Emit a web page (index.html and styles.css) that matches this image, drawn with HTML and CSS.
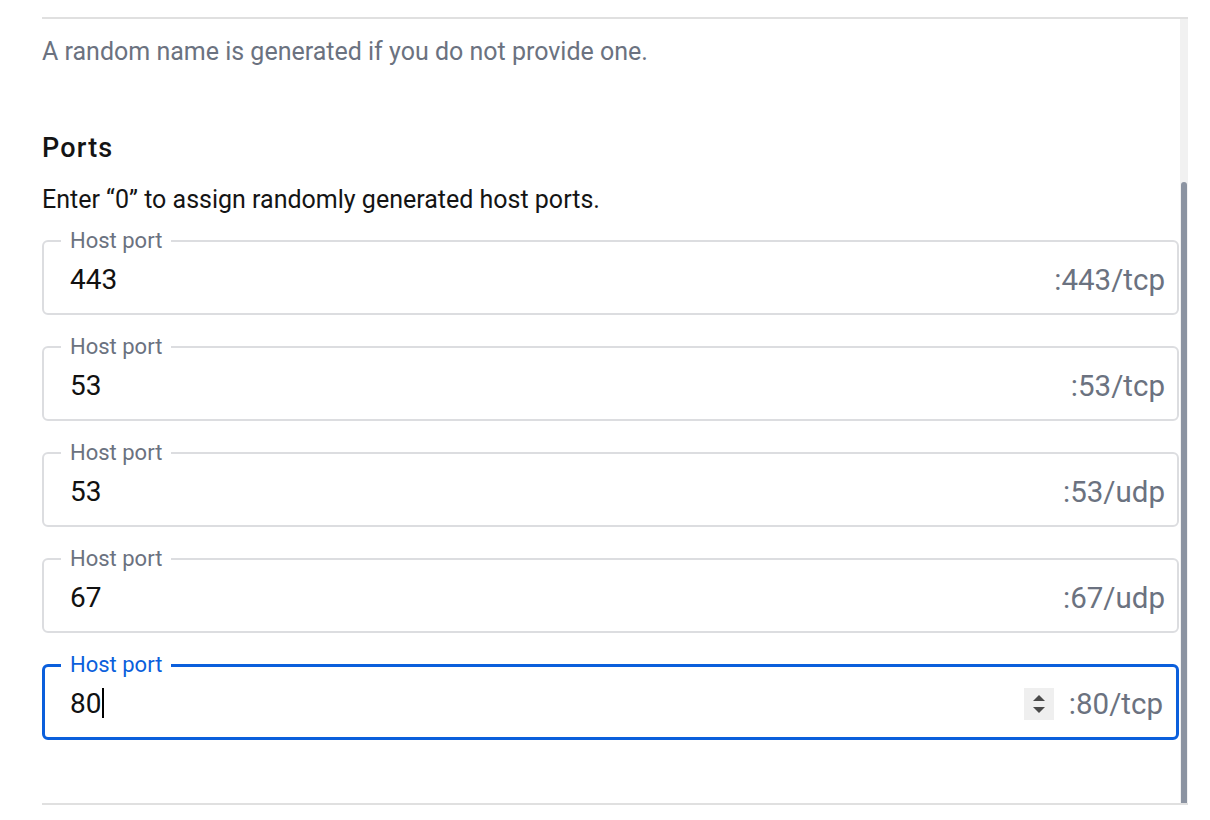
FILE: index.html
```html
<!DOCTYPE html>
<html lang="en">
<head>
  <meta charset="UTF-8">
  <title>Run a new container</title>
  <link rel="stylesheet" href="styles.css">
</head>
<body>
  <div class="panel">
    <div class="panel-body">
      <p class="hint">A random name is generated if you do not provide one.</p>

      <h3 class="section-title">Ports</h3>
      <p class="section-desc">Enter “0” to assign randomly generated host ports.</p>

      <fieldset class="port-field">
        <legend>Host port</legend>
        <div class="port-row">
          <input type="text" class="port-input" value="443">
          <span class="port-suffix">:443/tcp</span>
        </div>
      </fieldset>

      <fieldset class="port-field">
        <legend>Host port</legend>
        <div class="port-row">
          <input type="text" class="port-input" value="53">
          <span class="port-suffix">:53/tcp</span>
        </div>
      </fieldset>

      <fieldset class="port-field">
        <legend>Host port</legend>
        <div class="port-row">
          <input type="text" class="port-input" value="53">
          <span class="port-suffix">:53/udp</span>
        </div>
      </fieldset>

      <fieldset class="port-field">
        <legend>Host port</legend>
        <div class="port-row">
          <input type="text" class="port-input" value="67">
          <span class="port-suffix">:67/udp</span>
        </div>
      </fieldset>

      <fieldset class="port-field focused">
        <legend>Host port</legend>
        <div class="port-row">
          <span class="port-value">80<span class="caret"></span></span>
          <span class="spinner">
            <svg width="18" height="22" viewBox="0 0 18 22">
              <path d="M3 8 L9 2 L15 8 Z" fill="#4a4a4a"/>
              <path d="M3 14 L15 14 L9 20 Z" fill="#4a4a4a"/>
            </svg>
          </span>
          <span class="port-suffix">:80/tcp</span>
        </div>
      </fieldset>
    </div>

    <!-- scrollbar -->
    <div class="scroll-track">
      <div class="scroll-thumb"></div>
    </div>
  </div>
</body>
</html>
```

FILE: styles.css
```css
/* Layout */
body {
  margin: 0;
  padding-top: 17px;
  background: #fff;
  font-family: Roboto, "Liberation Sans", sans-serif;
  color: #141414;
}

.panel {
  display: flex;
  margin-left: 42px;
  width: 1146px;
  height: 784px;
  border-top: 2px solid #e0e0e0;
  border-bottom: 2px solid #e0e0e0;
  overflow: hidden;
}

.panel-body {
  flex: 1;
  padding-top: 18px;
}

.hint {
  margin: 0;
  font-size: 25px;
  line-height: 30px;
  color: #6b7280;
}

.section-title {
  margin: 65px 0 0;
  font-size: 27px;
  font-weight: 500;
  letter-spacing: 1.2px;
  line-height: 32px;
}

.section-desc {
  margin: 21px 0 13px;
  font-size: 25px;
  line-height: 30px;
}

/* Port inputs */
.port-field {
  margin: 0 1px 19px 0;
  padding: 0 12px 0 17px;
  border: 2px solid #dcdde0;
  border-radius: 6px;
  min-width: 0;
}

.port-field legend {
  padding: 0 9px;
  font-size: 22px;
  line-height: 26px;
  color: #6b7280;
}

.port-row {
  display: flex;
  align-items: center;
  height: 51px;
  padding-bottom: 8px;
}

.port-input,
.port-value {
  flex: 1;
  min-width: 0;
  padding: 0 9px;
  border: none;
  outline: none;
  font-family: inherit;
  font-size: 28px;
  line-height: 34px;
  color: #111;
  background: transparent;
}

.port-suffix {
  font-size: 29.5px;
  line-height: 34px;
  color: #6b7280;
}

.focused {
  border: 3px solid #0b5fdc;
  padding-left: 16px;
  padding-right: 13px;
}

.focused legend {
  color: #0b5fdc;
}

.caret {
  display: inline-block;
  width: 2px;
  height: 30px;
  margin-left: 1px;
  vertical-align: -5px;
  background: #000;
}

.spinner {
  display: flex;
  align-items: center;
  justify-content: center;
  width: 30px;
  height: 32px;
  margin-right: 15px;
  background: #efefef;
}

/* Scrollbar */
.scroll-track {
  width: 8px;
  background: #f1f1f1;
}

.scroll-thumb {
  margin: 163px 1px 0;
  height: 700px;
  border-radius: 3px;
  background: #8b93a1;
}
```
